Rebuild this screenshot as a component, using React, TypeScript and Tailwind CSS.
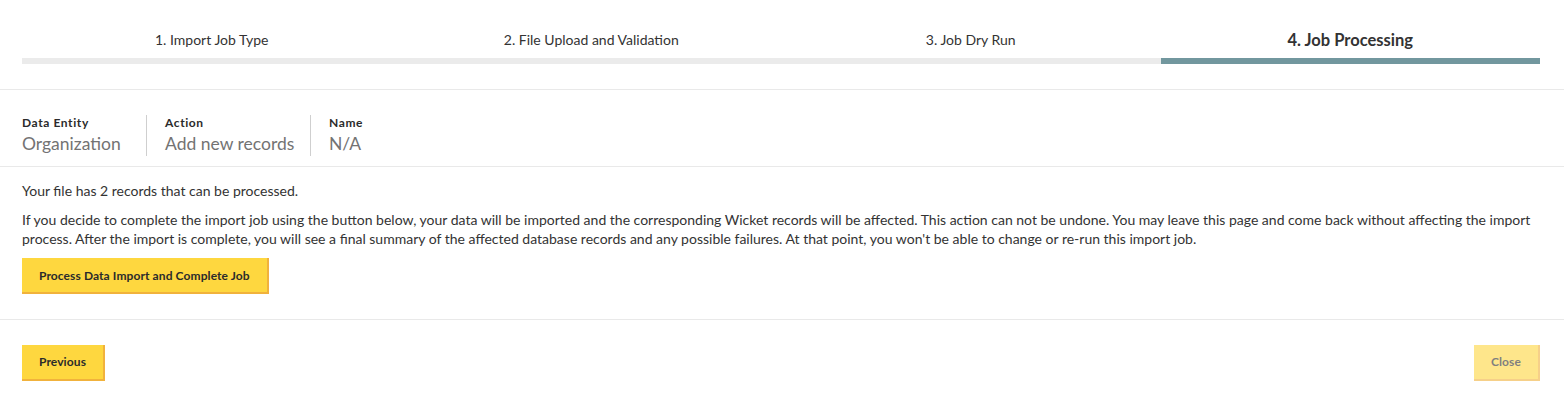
import React from 'react';

const steps = ['1. Import Job Type', '2. File Upload and Validation', '3. Job Dry Run', '4. Job Processing'];
const activeStep = 3;

const summary = [
  { label: 'Data Entity', value: 'Organization', width: 'w-[125px]' },
  { label: 'Action', value: 'Add new records', width: 'w-[164px]' },
  { label: 'Name', value: 'N/A', width: '' },
];

const btn =
  'h-9 px-[17px] bg-[#fed73f] border-r-2 border-b-2 border-[#f1b23c] text-[12px] font-bold text-[#2b2b2b] tracking-[0.1px]';

export default function App() {
  return (
    <div className="w-[1564px] h-[406px] bg-white text-[#333] font-['Lato','Liberation_Sans',sans-serif]">
      <div className="pl-[22px] pr-[24px] pt-[30px] pb-[25px] border-b border-[#e9e9e9]">
        <div className="grid grid-cols-4">
          {steps.map((s, i) => (
            <div key={s} className="flex flex-col">
              <div
                className={`h-[28px] text-center leading-[20px] ${
                  i === activeStep ? 'text-[16.5px] font-bold text-[#333]' : 'text-[14px] text-[#333]'
                }`}
              >
                {s}
              </div>
              <div className={`h-[6px] ${i === activeStep ? 'bg-[#72979e]' : 'bg-[#ebebeb]'}`} />
            </div>
          ))}
        </div>
      </div>

      <div className="pl-[22px] pr-[24px] h-[77px] pt-[25px] flex items-start border-b border-[#e9e9e9]">
        {summary.map((item, i) => (
          <div
            key={item.label}
            className={`flex flex-col shrink-0 ${item.width} ${i > 0 ? 'pl-[18px]' : ''} ${
              i < summary.length - 1 ? 'border-r border-[#cfcfcf]' : ''
            }`}
          >
            <span className="text-[12px] font-bold tracking-[0.6px] text-[#2b2b2b] leading-[16px]">{item.label}</span>
            <span className="text-[17.5px] text-[#737373] leading-[25px]">{item.value}</span>
          </div>
        ))}
      </div>

      <div className="pl-[22px] pr-[24px] pt-[14px] pb-[25px] border-b border-[#e9e9e9] text-[14px] leading-[19px]">
        <p>Your file has 2 records that can be processed.</p>
        <p className="mt-[10px]">
          If you decide to complete the import job using the button below, your data will be imported and the
          corresponding Wicket records will be affected. This action can not be undone. You may leave this page and
          come back without affecting the import process. After the import is complete, you will see a final summary of
          the affected database records and any possible failures. At that point, you won't be able to change or re-run
          this import job.
        </p>
        <button className={`${btn} mt-[10px]`}>Process Data Import and Complete Job</button>
      </div>

      <div className="pl-[22px] pr-[24px] pt-[25px] flex justify-between">
        <button className={btn}>Previous</button>
        <button className={`${btn} opacity-60 w-[66px] px-0`}>Close</button>
      </div>
    </div>
  );
}
